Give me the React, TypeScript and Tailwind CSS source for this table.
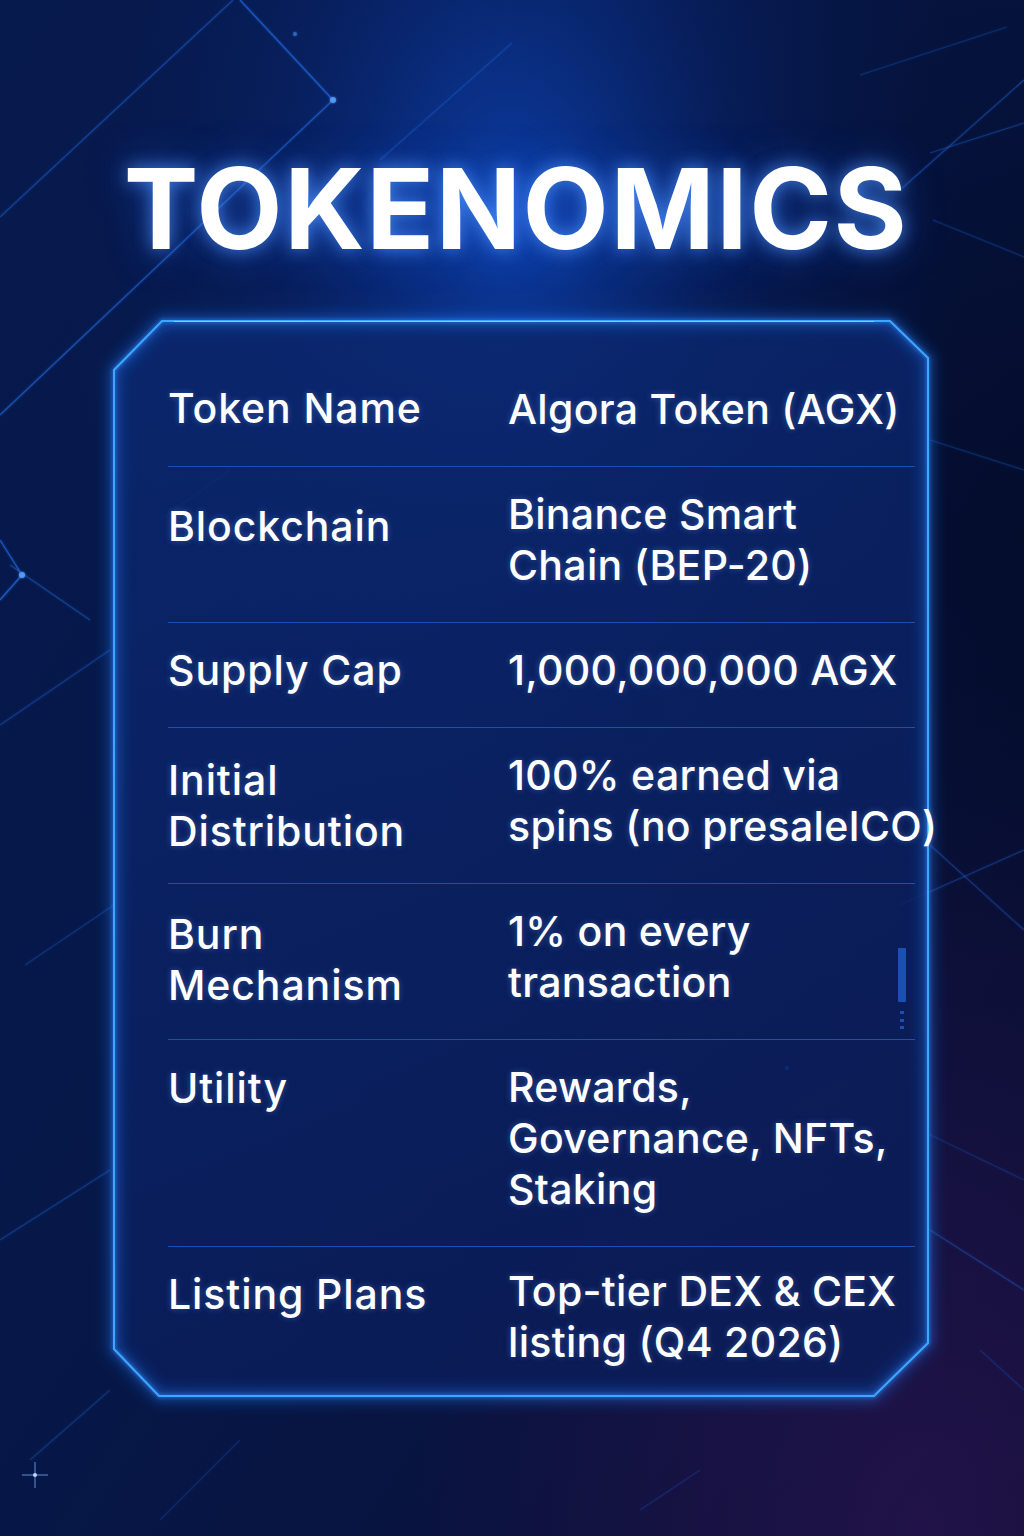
import React from "react";

type Row = { label: string[]; value: string[]; labelOffset: string; pt: string };

const rows: Row[] = [
  { label: ["Token Name"], value: ["Algora Token (AGX)"], labelOffset: "translate-y-[-1px]", pt: "pt-[21px]" },
  { label: ["Blockchain"], value: ["Binance Smart", "Chain (BEP-20)"], labelOffset: "translate-y-[12px]", pt: "pt-[22px]" },
  { label: ["Supply Cap"], value: ["1,000,000,000 AGX"], labelOffset: "translate-y-0", pt: "pt-[22px]" },
  { label: ["Initial", "Distribution"], value: ["100% earned via", "spins (no presaleICO)"], labelOffset: "translate-y-[5px]", pt: "pt-[22px]" },
  { label: ["Burn", "Mechanism"], value: ["1% on every", "transaction"], labelOffset: "translate-y-[3px]", pt: "pt-[22px]" },
  { label: ["Utility"], value: ["Rewards,", "Governance, NFTs,", "Staking"], labelOffset: "translate-y-[1px]", pt: "pt-[22px]" },
  { label: ["Listing Plans"], value: ["Top-tier DEX & CEX", "listing (Q4 2026)"], labelOffset: "translate-y-[3px]", pt: "pt-[19px]" },
];

function Background() {
  const lines: [number, number, number, number, number][] = [
    [0, 217, 233, 0, 0.3],
    [240, 0, 333, 100, 0.5],
    [333, 100, 0, 415, 0.45],
    [512, 43, 380, 160, 0.2],
    [1007, 27, 860, 75, 0.2],
    [1024, 80, 900, 190, 0.3],
    [1024, 123, 930, 153, 0.25],
    [933, 220, 1024, 257, 0.2],
    [930, 440, 1024, 470, 0.2],
    [900, 905, 1024, 850, 0.25],
    [930, 845, 1024, 930, 0.25],
    [930, 1230, 1024, 1290, 0.25],
    [0, 540, 22, 575, 0.55],
    [22, 575, 0, 600, 0.55],
    [10, 565, 90, 620, 0.3],
    [0, 725, 110, 650, 0.25],
    [0, 1240, 110, 1170, 0.25],
    [25, 965, 114, 905, 0.2],
    [30, 1460, 110, 1390, 0.2],
    [160, 520, 230, 470, 0.2],
    [160, 1520, 240, 1440, 0.15],
    [640, 1510, 700, 1470, 0.15],
    [920, 1130, 1024, 1180, 0.15],
    [980, 1350, 1024, 1390, 0.15],
  ];
  return (
    <svg
      className="absolute inset-0 pointer-events-none"
      width={1024}
      height={1536}
      viewBox="0 0 1024 1536"
    >
      <defs>
        <linearGradient id="bgBase" x1="0" y1="0" x2="1" y2="1">
          <stop offset="0" stopColor="#071a4e" />
          <stop offset="0.5" stopColor="#061747" />
          <stop offset="1" stopColor="#0c0e34" />
        </linearGradient>
        <radialGradient id="glowTop" cx="0.5" cy="0.14" r="0.45">
          <stop offset="0" stopColor="#0d45b8" stopOpacity="0.85" />
          <stop offset="0.5" stopColor="#0a2f8a" stopOpacity="0.3" />
          <stop offset="1" stopColor="#061a50" stopOpacity="0" />
        </radialGradient>
        <radialGradient id="glowRight" cx="1" cy="0.35" r="0.6">
          <stop offset="0" stopColor="#030a26" stopOpacity="0.75" />
          <stop offset="1" stopColor="#030a26" stopOpacity="0" />
        </radialGradient>
        <radialGradient id="glowBottom" cx="0.9" cy="1" r="0.5">
          <stop offset="0" stopColor="#2a1450" stopOpacity="0.7" />
          <stop offset="1" stopColor="#2a1450" stopOpacity="0" />
        </radialGradient>
        <filter id="lineGlow" x="-10%" y="-10%" width="120%" height="120%">
          <feGaussianBlur stdDeviation="1.2" result="b" />
          <feMerge>
            <feMergeNode in="b" />
            <feMergeNode in="SourceGraphic" />
          </feMerge>
        </filter>
      </defs>
      <rect width="1024" height="1536" fill="url(#bgBase)" />
      <rect width="1024" height="1536" fill="url(#glowRight)" />
      <rect width="1024" height="1536" fill="url(#glowTop)" />
      <rect width="1024" height="1536" fill="url(#glowBottom)" />
      <g filter="url(#lineGlow)">
        {lines.map(([x1, y1, x2, y2, o], i) => (
          <line key={i} x1={x1} y1={y1} x2={x2} y2={y2} stroke="#2a7bff" strokeOpacity={o} strokeWidth={1.2} />
        ))}
        <circle cx="333" cy="100" r="3" fill="#5aa0ff" fillOpacity="0.8" />
        <circle cx="22" cy="575" r="3" fill="#5aa0ff" fillOpacity="0.8" />
        <circle cx="295" cy="34" r="2" fill="#3a7fe0" fillOpacity="0.6" />
        <circle cx="787" cy="1068" r="2" fill="#3a7fe0" fillOpacity="0.6" />
      </g>
      <g stroke="#6fb0ff" strokeOpacity="0.8" strokeWidth="1">
        <line x1="35" y1="1462" x2="35" y2="1488" />
        <line x1="22" y1="1475" x2="48" y2="1475" />
      </g>
      <circle cx="35" cy="1475" r="2" fill="#bcd8ff" />
    </svg>
  );
}

function CardFrame() {
  const pts = "48,0 776,0 814,37 814,1022 760,1075 45,1075 0,1028 0,49";
  return (
    <svg
      className="absolute inset-0 pointer-events-none overflow-visible"
      width={814}
      height={1075}
      viewBox="0 0 814 1075"
    >
      <defs>
        <linearGradient id="cardFill" x1="0" y1="0" x2="0.3" y2="1">
          <stop offset="0" stopColor="#0b2870" stopOpacity="0.85" />
          <stop offset="1" stopColor="#0a1d5a" stopOpacity="0.85" />
        </linearGradient>
        <filter id="frameGlow" x="-10%" y="-10%" width="120%" height="120%">
          <feGaussianBlur stdDeviation="7" />
        </filter>
        <filter id="frameGlow2" x="-10%" y="-10%" width="120%" height="120%">
          <feGaussianBlur stdDeviation="2" />
        </filter>
      </defs>
      <polygon points={pts} fill="url(#cardFill)" />
      <polygon points={pts} fill="none" stroke="#1f7dff" strokeWidth="10" strokeOpacity="0.45" filter="url(#frameGlow)" />
      <polygon points={pts} fill="none" stroke="#2b8dff" strokeWidth="3" strokeOpacity="0.8" filter="url(#frameGlow2)" />
      <polygon points={pts} fill="none" stroke="#3ea6ff" strokeWidth="2" />
      <line x1="60" y1="0.5" x2="760" y2="0.5" stroke="#9fd3ff" strokeWidth="1" strokeOpacity="0.7" />
    </svg>
  );
}

export default function App() {
  return (
    <div
      className="relative w-[1024px] h-[1536px] overflow-hidden bg-[#061a50]"
      style={{ fontFamily: "Inter, 'Noto Sans', sans-serif" }}
    >
      <Background />
      <div className="relative z-10 flex flex-col">
        <h1 className="pt-[152px] text-center text-[112px] leading-none font-bold text-white tracking-[1.5px] pl-[8px] [text-shadow:0_0_18px_rgba(80,150,255,0.8),0_0_40px_rgba(40,110,255,0.5)]">
          TOKENOMICS
        </h1>
        <div className="relative mt-[57px] ml-[114px] w-[814px] h-[1075px]">
          <CardFrame />
          <div className="absolute left-[784px] top-[627px] w-[8px] h-[54px] bg-[#1b4fb5] rounded-[1px]" />
          <div className="absolute left-[786px] top-[690px] w-[4px] h-[3px] bg-[#1b4fb5]" />
          <div className="absolute left-[786px] top-[698px] w-[4px] h-[3px] bg-[#1b4fb5]" />
          <div className="absolute left-[786px] top-[705px] w-[4px] h-[3px] bg-[#1b4fb5]" />
          <div className="relative pt-[42px] pl-[54px] pr-[13px] flex flex-col text-white text-[41px] leading-[51px] font-medium [text-shadow:0_0_6px_rgba(120,170,255,0.35)]">
            {rows.map((r, i) => (
              <div
                key={i}
                className={`grid grid-cols-[340px_1fr] ${r.pt} ${
                  i < rows.length - 1 ? "pb-[31px] border-b border-[#1d4fb0]" : ""
                }`}
              >
                <div className={`${r.labelOffset} whitespace-nowrap tracking-[0.9px]`}>
                  {r.label.map((l, j) => (
                    <div key={j}>{l}</div>
                  ))}
                </div>
                <div className="whitespace-nowrap tracking-[0.3px]">
                  {r.value.map((v, j) => (
                    <div key={j}>{v}</div>
                  ))}
                </div>
              </div>
            ))}
          </div>
        </div>
      </div>
    </div>
  );
}
